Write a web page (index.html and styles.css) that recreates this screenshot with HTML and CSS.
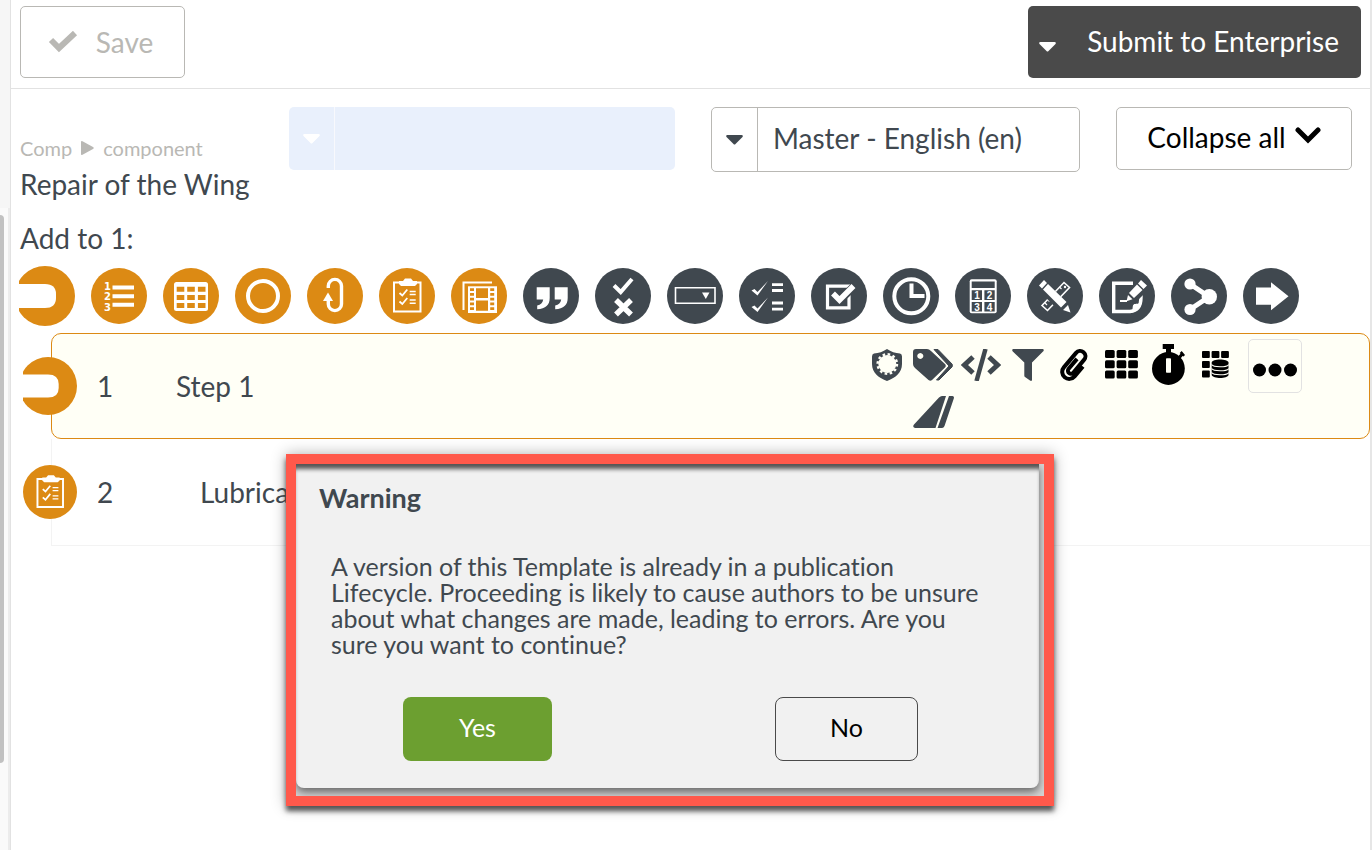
FILE: index.html
```html
<!DOCTYPE html>
<html lang="en">
<head>
<meta charset="utf-8">
<title>Repair of the Wing</title>
<link rel="stylesheet" href="styles.css">
</head>
<body>
<svg class="sprite" aria-hidden="true">
  <symbol id="hook" viewBox="0 0 56 60"><circle cx="26" cy="30" r="30" fill="#dc8a14"/><path d="M0 18H26q11 0 11 10v4q0 10-11 10H0z" fill="#fff"/></symbol>
  <symbol id="clipboard" viewBox="0 0 56 56"><circle cx="28" cy="28" r="28" fill="#dc8a14"/><path d="M15 14.500H41.500V43.500H15z" fill="none" stroke="#fff" stroke-width="2"/><path d="M20 13h4l2-2.500h6l2 2.500h4v3l-2 2H22l-2-2z" fill="#fff"/><path d="M20.500 25l2.800 2.500 5-6M20.500 33.500l2.800 2.500 5-6" fill="none" stroke="#fff" stroke-width="1.800"/><path d="M30.700 23.500h6M30.700 26.500h6M30.700 32h6M30.700 35.200h6" stroke="#fff" stroke-width="1.400"/></symbol>
  <symbol id="caret" viewBox="0 0 17 10"><path d="M1.500 0h14q2 .3 1 2L9.500 9q-1 1-2 0L.5 2Q-.5.3 1.500 0z" fill="currentColor"/></symbol>
</svg>
<div class="app">
  <aside class="rail"><div class="rail-top"></div><div class="rail-scroll"><div class="thumb"></div></div></aside>
  <div class="main">
    <header class="topbar">
      <button class="save" disabled><svg width="30" height="22" viewBox="0 0 30 22"><path d="M3 9l8 8L27 2" fill="none" stroke="#b9b8b4" stroke-width="6" stroke-linejoin="miter"/></svg>Save</button>
      <div class="submit">
        <button class="submit-more" aria-label="More submit options"><svg width="17" height="10"><use href="#caret"/></svg></button>
        <button class="submit-main">Submit to Enterprise</button>
      </div>
    </header>

    <section class="heading">
      <div class="titles">
        <nav class="crumbs"><a href="#">Comp</a><svg width="13" height="14" viewBox="0 0 13 14"><path d="M0 1q0-1.500 1.500-.7L12 6q1.500 1 0 2L1.500 13.700Q0 14.500 0 13z" fill="#b9b8b4"/></svg><a href="#">component</a></nav>
        <h1>Repair of the Wing</h1>
      </div>
      <label class="picker picker-blank"><span class="picker-arrow"><svg width="17" height="10"><use href="#caret"/></svg></span><select aria-label="Filter"><option></option></select></label>
      <label class="picker picker-lang"><span class="picker-arrow"><svg width="17" height="10"><use href="#caret"/></svg></span><select aria-label="Language"><option>Master - English (en)</option></select></label>
      <button class="collapse">Collapse all <svg width="26" height="20" viewBox="0 0 26 20"><path d="M3 3l10 10L23 3" fill="none" stroke="#000" stroke-width="5" stroke-linecap="round"/></svg></button>
    </section>

    <p class="add-label">Add to 1:</p>
    <div class="tools">
      <button aria-label="Step"><svg class="hook" width="56" height="60"><use href="#hook"/></svg></button>
      <button aria-label="Numbered list"><svg viewBox="0 0 56 56"><circle cx="28" cy="28" r="28" fill="#dc8a14"/><path d="M21.500 19.500H43M21.500 28.200H43M21.500 36.700H43" stroke="#fff" stroke-width="4"/><g class="digits"><text x="13" y="22">1</text><text x="13" y="32">2</text><text x="13" y="43">3</text></g></svg></button>
      <button aria-label="Table"><svg viewBox="0 0 56 56"><circle cx="28" cy="28" r="28" fill="#dc8a14"/><rect x="11" y="14" width="34" height="29" rx="2.500" fill="#fff"/><path d="M13.700 18.700h7.600v5h-7.600zM24.200 18.700h7.600v5h-7.600zM34.900 18.700h7.600v5h-7.600zM13.700 26.900h7.600v5h-7.600zM24.200 26.900h7.600v5h-7.600zM34.900 26.900h7.600v5h-7.600zM13.700 34.900h7.600v5h-7.600zM24.200 34.900h7.600v5h-7.600zM34.900 34.900h7.600v5h-7.600z" fill="#dc8a14"/></svg></button>
      <button aria-label="Circle"><svg viewBox="0 0 56 56"><circle cx="28" cy="28" r="28" fill="#dc8a14"/><circle cx="28" cy="28" r="15" fill="none" stroke="#fff" stroke-width="4"/></svg></button>
      <button aria-label="Loop"><svg viewBox="0 0 56 56"><circle cx="28" cy="28" r="28" fill="#dc8a14"/><path d="M21.300 20V18a6.600 6.600 0 0 1 13.200 0V36a6.600 6.600 0 0 1-13.200 0V30" fill="none" stroke="#fff" stroke-width="3.400"/><path d="M21 24.500l5 8.500H16z" fill="#fff"/></svg></button>
      <button aria-label="Checklist"><svg><use href="#clipboard"/></svg></button>
      <button aria-label="Media"><svg viewBox="0 0 56 56"><circle cx="28" cy="28" r="28" fill="#dc8a14"/><path d="M12.500 42V14.500H41" fill="none" stroke="#fff" stroke-width="2"/><path d="M17 18.300h29V45H17z" fill="#fff"/><path d="M25 20.300h12V30H25zM25 32.500h12v10.200H25zM19 20.300h4v2.700h-4zM19 25h4v2.700h-4zM19 29.700h4v2.700h-4zM19 34.500h4v2.700h-4zM19 39.300h4V42h-4zM39.200 20.300h4v2.700h-4zM39.200 25h4v2.700h-4zM39.200 29.700h4v2.700h-4zM39.200 34.500h4v2.700h-4zM39.200 39.300h4V42h-4z" fill="#dc8a14"/></svg></button>
      <button aria-label="Quote"><svg viewBox="0 0 56 56"><circle cx="28" cy="28" r="28" fill="#40484f"/><path d="M13.700 19.300h13V30c0 7-4 10.800-12.500 11.300v-3.800c3.500-.6 5.500-2.500 6-6h-6.500zM31.700 19.300h13V30c0 7-4 10.800-12.500 11.300v-3.800c3.500-.6 5.500-2.500 6-6h-6.500z" fill="#fff"/></svg></button>
      <button aria-label="Yes or no"><svg viewBox="0 0 56 56"><circle cx="28" cy="28" r="28" fill="#40484f"/><path d="M19 17.500l6.700 6.500L37 11" fill="none" stroke="#fff" stroke-width="4"/><path d="M21 32l15 14.500M36 32L21 46.500" stroke="#fff" stroke-width="5.500"/></svg></button>
      <button aria-label="Drop-down"><svg viewBox="0 0 56 56"><circle cx="28" cy="28" r="28" fill="#40484f"/><path d="M8.500 19.800H48V35.200H8.500z" fill="none" stroke="#fff" stroke-width="1.600"/><path d="M35 24.500h7.500l-3.700 6.500z" fill="#fff"/></svg></button>
      <button aria-label="Multiple choice"><svg viewBox="0 0 56 56"><circle cx="28" cy="28" r="28" fill="#40484f"/><path d="M12.500 22.500l3-1.500 3 3L29 13 18.500 27.500zM12.500 39l3-1.500 3 3L29 29.500 18.500 44z" fill="#fff"/><path d="M33 16.700h11M33 22.500h11M33 35h11M33 41.200h11" stroke="#fff" stroke-width="2.800"/></svg></button>
      <button aria-label="Check box"><svg viewBox="0 0 56 56"><circle cx="28" cy="28" r="28" fill="#40484f"/><path d="M16.500 18.200H38V39.800H16.500z" fill="none" stroke="#fff" stroke-width="3.200"/><path d="M22 25l7 7L44 17.500" fill="none" stroke="#40484f" stroke-width="8"/><path d="M22 25.500l6.500 6.500L42.500 18" fill="none" stroke="#fff" stroke-width="5.500"/></svg></button>
      <button aria-label="Time"><svg viewBox="0 0 56 56"><circle cx="28" cy="28" r="28" fill="#40484f"/><circle cx="28.300" cy="28.300" r="17" fill="none" stroke="#fff" stroke-width="4"/><path d="M28.500 15.500V28h13" fill="none" stroke="#fff" stroke-width="4"/></svg></button>
      <button aria-label="Calculation"><svg viewBox="0 0 56 56"><circle cx="28" cy="28" r="28" fill="#40484f"/><rect x="14.700" y="11.300" width="27" height="34" rx="2" fill="#fff"/><path d="M16.700 13.500h23V20h-23zM16.700 22.200h10.300V32H16.700zM29.400 22.200h10.300V32H29.400zM16.700 34h10.300v9.500H16.700zM29.400 34h10.300v9.500H29.400z" fill="#40484f"/><g class="keys"><text x="22" y="31">1</text><text x="34.500" y="31">2</text><text x="22" y="42.500">3</text><text x="34.500" y="42.500">4</text></g></svg></button>
      <button aria-label="Design"><svg viewBox="0 0 56 56"><circle cx="28" cy="28" r="28" fill="#40484f"/><path d="M15 37.500L37 14.500l5.500 5L20.500 42.500z" fill="none" stroke="#fff" stroke-width="1.600"/><path d="M18 35l2 2M21 32l1.500 1.500M33 19.500l1.500 1.500" stroke="#fff" stroke-width="1.200"/><circle cx="38" cy="19" r="1.200" fill="#fff"/><path d="M12 15l27 27" stroke="#40484f" stroke-width="11"/><path d="M12 17.500l5-5.500 3 3-5 5.500zM16 21.500l5-5.500 18.500 18-5.500 5.500zM36 42l5-5 2.500 7.500z" fill="#fff"/></svg></button>
      <button aria-label="Note"><svg viewBox="0 0 56 56"><circle cx="28" cy="28" r="28" fill="#40484f"/><path d="M34 15.200H14.700V43.500H31q11-1 11-14V26" fill="none" stroke="#fff" stroke-width="3.400"/><path d="M31.500 44.500c3-2 1.500-6 3-8 2-1.500 6 .5 8.500-3.500-1 7-5 11-11.500 11.500z" fill="#fff"/><path d="M31 33L46 18" stroke="#40484f" stroke-width="10"/><path d="M42 12l6 5.500-3.500 3.500-5.500-5.500zM38 16.500l5.500 5.500-8.500 8-5-5zM29 27l4.500 4.200-6 2z" fill="#fff"/><path d="M21 33h7" stroke="#fff" stroke-width="2"/></svg></button>
      <button aria-label="Branch"><svg viewBox="0 0 56 56"><circle cx="28" cy="28" r="28" fill="#40484f"/><path d="M19 16l19 12.700L19 41.500" fill="none" stroke="#fff" stroke-width="5"/><circle cx="19" cy="16" r="5.600" fill="#fff"/><circle cx="19" cy="41.500" r="5.600" fill="#fff"/><circle cx="38.300" cy="28.700" r="7.700" fill="#fff"/></svg></button>
      <button aria-label="Go to"><svg viewBox="0 0 56 56"><circle cx="28" cy="28" r="28" fill="#40484f"/><path d="M13 19.500h15v-5.200l17.500 14L28 42.300v-5.500H13z" fill="#fff"/></svg></button>
    </div>

    <div class="steps">
      <div class="step step-active">
        <svg class="badge hook" width="54" height="58"><use href="#hook"/></svg>
        <span class="number">1</span>
        <span class="name">Step 1</span>
        <div class="actions">
          <div class="action-grid">
            <button aria-label="Certification"><svg width="30" height="32" viewBox="0 0 30 32"><path d="M15 0q6 4 13 4.500 2 .5 2 3V15c0 9-7 14-15 17C7 29 0 24 0 15V7.500q0-2.500 2-3Q9 4 15 0z" fill="#40484f"/><circle cx="15.300" cy="15" r="9" fill="#fffff6"/><circle cx="15.300" cy="15" r="9.700" fill="none" stroke="#fffff6" stroke-width="2.400" stroke-dasharray="2.600 2.480"/></svg></button>
            <button aria-label="Tags"><svg width="41" height="32" viewBox="0 0 41 32"><path d="M0 3Q0 0 3 0H14q2 0 4 2L32 15q1.500 1.500 0 3.500L19 31q-1.500 1.500-3.500 0L2 19q-2-1.500-2-4zM7.300 4a3 3 0 1 0 .01 0z" fill="#40484f" fill-rule="evenodd"/><path d="M21 .5h4L39 15q1 1.500 0 3L26 31h-2.500L36 17z" fill="#40484f" stroke="#40484f" stroke-width="1"/></svg></button>
            <button aria-label="Code"><svg width="40" height="32" viewBox="0 0 40 32"><path d="M12 8L3.500 16l8.500 8M28 8l8.500 8-8.500 8" fill="none" stroke="#40484f" stroke-width="5"/><path d="M24.500 0l-9 32" stroke="#40484f" stroke-width="4.500"/></svg></button>
            <button aria-label="Filter"><svg width="32" height="32" viewBox="0 0 32 32"><path d="M1 0H31q1.500 1 0 2.500L20 13.500V31q-.5 1.500-2 .5l-5-3.500q-.7-.5-.7-1.500V13.500L.8 2.500Q-.5 1 1 0z" fill="#40484f"/></svg></button>
            <button aria-label="Attachments"><svg width="30" height="34" viewBox="0 0 30 34"><path transform="rotate(40 15 17)" d="M22 13V26a7 7 0 0 1-14 0V7a5.300 5.300 0 0 1 10.600 0V24a3 3 0 0 1-6 0V11" fill="none" stroke="#000" stroke-width="4"/></svg></button>
            <button aria-label="Grid"><svg width="33" height="29" viewBox="0 0 33 29"><g fill="#000"><rect width="9.700" height="8" rx="1.500"/><rect x="11.600" width="9.700" height="8" rx="1.500"/><rect x="23.200" width="9.700" height="8" rx="1.500"/><rect y="10.200" width="9.700" height="8" rx="1.500"/><rect x="11.600" y="10.200" width="9.700" height="8" rx="1.500"/><rect x="23.200" y="10.200" width="9.700" height="8" rx="1.500"/><rect y="20.500" width="9.700" height="8" rx="1.500"/><rect x="11.600" y="20.500" width="9.700" height="8" rx="1.500"/><rect x="23.200" y="20.500" width="9.700" height="8" rx="1.500"/></g></svg></button>
            <button aria-label="Timer"><svg width="33" height="41" viewBox="0 0 33 41"><circle cx="16.400" cy="24.500" r="16.400"/><path d="M10.700 0H22v5h-3v5h-5V5h-3.300zM25.500 13l3-3.200-.8-.8 2-2 3.300 4-1.500 1.500-.9-.5-2.500 3z"/><rect x="14" y="14.300" width="5" height="14.500" rx=".8" fill="#fffff6"/></svg></button>
            <button aria-label="Data grid"><svg width="27" height="27" viewBox="0 0 27 27"><rect width="7.800" height="7" rx="1"/><rect x="9.600" width="7.800" height="7" rx="1"/><rect x="19.100" width="7.800" height="7" rx="1"/><rect y="10" width="7.800" height="7" rx="1"/><rect y="19.500" width="7.800" height="7" rx="1"/><path d="M9.700 11.500C10 7.500 26 7.500 26.500 11.500V24c-1 4-15.500 4-16.800 0z"/><path d="M9.500 13.500c2 3 15 3 17.300 0M9.500 17.500c2 3 15 3 17.300 0M9.500 21.500c2 3 15 3 17.300 0" fill="none" stroke="#fffff6" stroke-width="1.200"/></svg></button>
            <button class="second-line" aria-label="Fleet"><svg width="41" height="32" viewBox="0 0 41 32"><path d="M29 0h4L22.500 32H2q-3-1-1-3.500L26 1.500Q27.500 0 29 0zM36 0h3.500q2 .5 1.300 2.500L31.500 30q-.8 2-2.500 2h-4.500z" fill="#40484f"/></svg></button>
          </div>
          <button class="more" aria-label="More actions"><svg width="44" height="14" viewBox="0 0 44 14"><circle cx="6.500" cy="7" r="6.500"/><circle cx="22" cy="7" r="6.500"/><circle cx="37.500" cy="7" r="6.500"/></svg></button>
        </div>
      </div>
      <div class="step">
        <svg class="badge" width="54" height="54"><use href="#clipboard"/></svg>
        <span class="number">2</span>
        <span class="name name-nested">Lubrica</span>
      </div>
    </div>
  </div>
</div>

<div class="alert-frame">
  <div class="alert" role="alertdialog" aria-labelledby="alert-title" aria-describedby="alert-text">
    <h2 id="alert-title">Warning</h2>
    <p id="alert-text">A version of this Template is already in a publication<br>Lifecycle. Proceeding is likely to cause authors to be unsure<br>about what changes are made, leading to errors. Are you<br>sure you want to continue?</p>
    <div class="alert-buttons"><button class="yes">Yes</button><button class="no">No</button></div>
  </div>
</div>
</body>
</html>
```
FILE: styles.css
```css
* { box-sizing: border-box; }
body { margin: 0; background: #fff; color: #40484f; font: 28px/32px Lato, "Open Sans", sans-serif; font-variant-ligatures: none; }
button, select { font: inherit; color: inherit; margin: 0; padding: 0; border: 0; background: none; }
h1, h2, p { margin: 0; font-weight: 400; font-size: inherit; }
svg { display: block; flex: none; }
.sprite { position: absolute; width: 0; height: 0; }

.app { display: flex; min-height: 100vh; }
.rail { width: 11px; flex: none; display: flex; flex-direction: column; background: #f6f6f6; border-right: 1px solid #e2e2e2; }
.rail-top { height: 208px; }
.rail-scroll { flex: 1; padding-top: 7px; background: #fafafa; border-right: 2px solid #ececec; }
.thumb { width: 4px; height: 548px; background: #c1c1c1; border-radius: 0 4px 4px 0; }
.main { flex: 1; min-width: 0; border-right: 2px solid #e6e6e6; }

.topbar { display: flex; justify-content: space-between; align-items: flex-start; padding: 6px 9px 10px; border-bottom: 1px solid #e2e2e2; }
.save { display: flex; align-items: center; justify-content: center; gap: 18px; width: 165px; height: 72px; padding-right: 4px; border: 1px solid #b9b8b4; border-radius: 5px; color: #b9b8b4; }
.submit { display: flex; height: 72px; background: #4a4a4a; color: #fff; border-radius: 5px; }
.submit-more { width: 38px; padding: 10px 0 0 11px; }
.submit-main { padding: 0 22px 2px 21px; }

.heading { display: flex; align-items: flex-start; gap: 36px; padding: 18px 18px 0 9px; }
.titles { flex: 1; min-width: 233px; padding-top: 29px; white-space: nowrap; }
.crumbs { display: flex; align-items: center; gap: 9px; font-size: 20px; line-height: 24px; color: #b9b8b4; }
.crumbs a { color: inherit; text-decoration: none; }
h1 { line-height: 40px; margin-top: 4px; }
.picker { display: flex; border-radius: 5px; overflow: hidden; }
.picker select { flex: 1; min-width: 0; padding: 0 0 4px 15px; appearance: none; }
.picker-arrow { width: 46px; display: flex; align-items: center; justify-content: center; border-right: 1px solid #b9b8b4; }
.picker-blank { width: 386px; height: 63px; background: #e9f0fc; color: #fff; }
.picker-blank .picker-arrow { border-color: #f8f9fd; }
.picker-lang { width: 369px; height: 65px; border: 1px solid #b9b8b4; }
.collapse { display: flex; align-items: center; justify-content: center; gap: 9px; width: 236px; height: 63px; padding-bottom: 4px; border: 1px solid #b9b8b4; border-radius: 5px; color: #000; }

.add-label { padding: 18px 9px 12px; }
.tools { display: flex; align-items: center; gap: 16px; padding: 0 8px; height: 60px; }
.tools svg { width: 56px; height: 56px; }
.tools .hook { height: 60px; }
.digits text { font: 700 10px "DejaVu Sans", sans-serif; fill: #fff; }
.keys text { font: 700 10px "Liberation Sans", sans-serif; fill: #fff; text-anchor: middle; }

.steps { margin: 7px 0 0 40px; }
.step { display: flex; align-items: center; height: 107px; border: 1px solid #f3f3f3; border-top: 0; border-right: 0; }
.step-active { height: 106px; background: #fffff6; border: 1px solid #dc8a14; border-radius: 10px; }
.badge { margin-left: -29px; }
.number { width: 99px; flex: none; padding-left: 20px; }
.name { flex: 1; }
.name-nested { padding-left: 24px; }
.actions { display: flex; align-self: flex-start; align-items: flex-start; gap: 9px; padding: 5px 67px 0 0; }
.action-grid { display: grid; grid-template-columns: repeat(8, 47px); grid-auto-rows: 47px; padding-top: 2px; }
.action-grid button { display: flex; align-items: center; justify-content: center; }
.action-grid .second-line { grid-column: 2; }
.more { display: flex; align-items: center; justify-content: center; width: 54px; height: 54px; padding-top: 7px; border: 1px solid #e2e2e2; border-radius: 5px; }

.alert-frame { position: absolute; left: 286px; top: 454px; width: 768px; border: 10px solid #ff594b; padding: 0 5px 8px 0; background: #d4d4d4; box-shadow: 0 5px 5px #555, 0 0 14px rgba(0, 0, 0, .3); overflow: clip; }
.alert { height: 324px; padding: 18px 23px; background: #f1f1f1; border-radius: 0 0 8px 8px; box-shadow: 0 4px 8px #666, inset 0 7px 4px -2px #555; font-size: 25px; line-height: 26px; }
.alert h2 { font-weight: 700; font-size: 27px; line-height: 32px; }
.alert p { padding: 39px 0 0 12px; white-space: nowrap; }
.alert-buttons { display: flex; justify-content: space-between; padding: 40px 98px 0 84px; }
.alert-buttons button { height: 64px; padding-bottom: 4px; border-radius: 8px; }
.alert-buttons .yes { width: 149px; background: #6c9f30; color: #fff; }
.alert-buttons .no { width: 143px; border: 1px solid #4a4a4a; color: #000; }
```
